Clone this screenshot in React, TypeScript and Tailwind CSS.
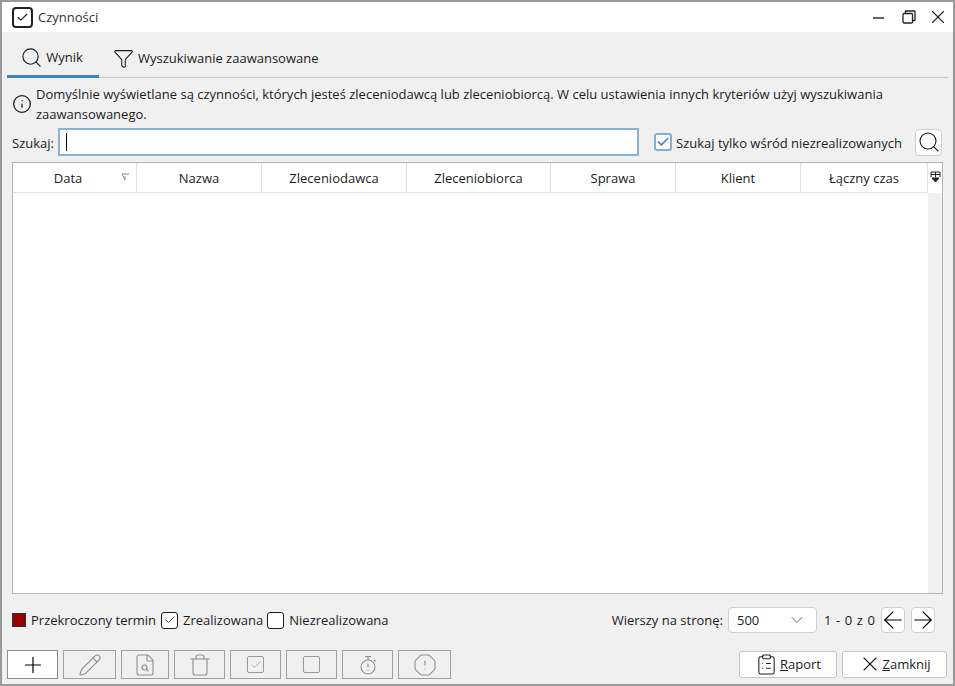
import React from 'react';
import { Search, Filter, Info, X, Plus, Pencil, FileSearch, Trash, Check, OctagonAlert, ChevronDown, ArrowLeft, ArrowRight, ClipboardList } from 'lucide-react';

const columns = [
  { name: 'Data', width: 'w-[124px] pr-[13px]' },
  { name: 'Nazwa', width: 'w-[125px]' },
  { name: 'Zleceniodawca', width: 'w-[145px]' },
  { name: 'Zleceniobiorca', width: 'w-[144px]' },
  { name: 'Sprawa', width: 'w-[125px]' },
  { name: 'Klient', width: 'w-[125px]' },
  { name: 'Łączny czas', width: 'w-[127px]' },
];

function CheckBox({ checked }: { checked?: boolean }) {
  return (
    <span className="flex h-[17px] w-[17px] items-center justify-center rounded-[3px] border border-[#1a1a1a] bg-white">
      {checked && <Check className="h-3 w-3 text-[#1a1a1a]" strokeWidth={1.5} />}
    </span>
  );
}

function ToolButton({ width, active, children }: { width: string; active?: boolean; children: React.ReactNode }) {
  return (
    <button className={`flex h-[29px] items-center justify-center border ${width} ${active ? 'border-[#8f8f8f] bg-white text-black' : 'border-[#a0a0a0] text-[#8f8f8f]'}`}>
      {children}
    </button>
  );
}

function SmallButton({ children }: { children: React.ReactNode }) {
  return (
    <button className="flex h-[26px] w-[24px] items-center justify-center rounded-[4px] border border-[#d0d0d0] bg-white text-black">
      {children}
    </button>
  );
}

export default function App() {
  return (
    <div className="flex h-[686px] w-[955px] flex-col overflow-hidden border-2 border-t-2 border-[#9a9a9a] bg-[#f0f0f0] text-[13px] text-[#1c1c1c] [font-family:'Open_Sans',sans-serif]">
      <div className="flex h-[30px] shrink-0 items-center bg-white pl-[10px] pr-[4px]">
        <span className="flex h-[21px] w-[21px] items-center justify-center rounded-[4px] border-2 border-[#222]">
          <Check className="h-[13px] w-[13px]" strokeWidth={2} />
        </span>
        <span className="ml-[5px] mt-[2px] text-[#333]">Czynności</span>
        <div className="ml-auto flex items-center text-[#222]">
          <svg width="11" height="14" viewBox="0 0 11 14" stroke="currentColor" strokeWidth="1.4">
            <path d="M0 8h11" />
          </svg>
          <svg className="ml-[18px]" width="14" height="14" viewBox="0 0 14 14" fill="none" stroke="currentColor" strokeWidth="1.3">
            <rect x="1" y="3.5" width="9.5" height="9.5" rx="1" />
            <path d="M3.5 3.5V1.5a.5.5 0 0 1 .5-.5h8.5a.5.5 0 0 1 .5.5V10a.5.5 0 0 1-.5.5h-2" />
          </svg>
          <X className="ml-[11px] h-[22px] w-[22px]" strokeWidth={1.2} />
        </div>
      </div>

      <div className="flex min-h-0 flex-1 flex-col px-[5px] pb-[5px] pt-[8px]">
        <div className="flex h-[38px] shrink-0 items-stretch border-b border-[#c8c8c8] pr-[1px]">
          <div className="-mb-px flex w-[92px] items-center justify-center gap-[3px] border-b-[3px] border-[#3d82bf] pr-[3px]">
            <Search className="h-[23px] w-[23px]" strokeWidth={1.2} />
            <span>Wynik</span>
          </div>
          <div className="ml-[14px] flex items-center gap-[4px]">
            <Filter className="h-[21px] w-[21px]" strokeWidth={1.2} />
            <span>Wyszukiwanie zaawansowane</span>
          </div>
        </div>

        <div className="mt-[6px] flex shrink-0 items-center pl-[5px]">
          <Info className="h-[20px] w-[20px] shrink-0" strokeWidth={1.5} />
          <p className="ml-[4px] w-[880px] leading-[20px]">
            Domyślnie wyświetlane są czynności, których jesteś zleceniodawcą lub zleceniobiorcą. W celu ustawienia innych kryteriów użyj wyszukiwania zaawansowanego.
          </p>
        </div>

        <div className="mt-[4px] flex h-[28px] shrink-0 items-center pl-[5px]">
          <span className="w-[46px] pt-[3px]">Szukaj:</span>
          <div className="flex h-[28px] w-[581px] items-center border-2 border-[#8ab2d6] bg-white pl-[6px]">
            <span className="h-[18px] w-px bg-black" />
          </div>
          <span className="ml-[15px] flex h-[18px] w-[18px] items-center justify-center rounded-[3px] border-2 border-[#7fb0dc] bg-white">
            <Check className="h-[14px] w-[14px] text-[#3d86c6]" strokeWidth={3} />
          </span>
          <span className="ml-[4px] pt-[3px]">Szukaj tylko wśród niezrealizowanych</span>
          <button className="ml-auto mr-[6px] flex h-[27px] w-[27px] items-center justify-center rounded-[4px] border border-[#d0d0d0] bg-white">
            <Search className="h-[24px] w-[24px]" strokeWidth={1.1} />
          </button>
        </div>

        <div className="ml-[5px] mt-[6px] flex min-h-0 w-[931px] flex-1 border border-[#b5b5b5] bg-white">
          <div className="flex w-[915px] flex-col">
            <div className="flex h-[30px] shrink-0 border-b border-[#e2e2e2]">
              {columns.map((col) => (
                <div key={col.name} className={`relative flex items-center justify-center border-r border-[#e2e2e2] pt-[2px] ${col.width}`}>
                  {col.name}
                  {col.name === 'Data' && (
                    <svg className="absolute right-[6px] top-[10px]" width="9" height="8" viewBox="0 0 9 8" fill="none" stroke="#8a8a8a" strokeWidth="1">
                      <path d="M1 1h7M1 1l3 6V3" />
                    </svg>
                  )}
                </div>
              ))}
            </div>
          </div>
          <div className="relative flex-1 bg-[#f0f0f0]">
            <div className="flex h-[30px] justify-center bg-white pt-[8px]">
              <svg width="11" height="12" viewBox="0 0 11 12" fill="none" stroke="#222" strokeWidth="1">
                <path d="M1 6V1h9v5M1 3.5h9M5.5 1v5" />
                <path d="M2 7h7L5.5 11z" fill="#222" />
              </svg>
            </div>
          </div>
        </div>

        <div className="mt-[13px] flex h-[26px] shrink-0 items-center pl-[5px] pr-[13px]">
          <span className="h-[14px] w-[14px] border border-[#333] bg-[#960000]" />
          <span className="ml-[5px] pt-[1px]">Przekroczony termin</span>
          <span className="ml-[5px]"><CheckBox checked /></span>
          <span className="ml-[5px] pt-[1px]">Zrealizowana</span>
          <span className="ml-[4px]"><CheckBox /></span>
          <span className="ml-[5px] pt-[1px]">Niezrealizowana</span>
          <span className="ml-auto pt-[1px]">Wierszy na stronę:</span>
          <div className="ml-[5px] flex h-[26px] w-[89px] items-center justify-between rounded-[4px] border border-[#d0d0d0] bg-white pl-[8px] pr-[9px]">
            <span className="pt-[1px]">500</span>
            <ChevronDown className="h-[20px] w-[20px] text-[#555]" strokeWidth={1.1} />
          </div>
          <span className="ml-[7px] mr-[6px] w-[51px] whitespace-nowrap pt-[1px] tracking-[0.6px]">1 - 0 z 0</span>
          <SmallButton><ArrowLeft className="h-[28px] w-[28px] shrink-0" strokeWidth={1} /></SmallButton>
          <span className="ml-[6px]"><SmallButton><ArrowRight className="h-[28px] w-[28px] shrink-0" strokeWidth={1} /></SmallButton></span>
        </div>

        <div className="mt-[17px] flex h-[29px] shrink-0 items-center">
          <div className="flex gap-[5px]">
            <ToolButton width="w-[51px]" active><Plus className="h-[26px] w-[26px]" strokeWidth={1.1} /></ToolButton>
            <ToolButton width="w-[53px]"><Pencil className="h-[24px] w-[24px]" strokeWidth={1.1} /></ToolButton>
            <ToolButton width="w-[48px]"><FileSearch className="h-[24px] w-[24px]" strokeWidth={1.1} /></ToolButton>
            <ToolButton width="w-[51px]"><Trash className="h-[24px] w-[24px]" strokeWidth={1.1} /></ToolButton>
            <ToolButton width="w-[51px]">
              <span className="flex h-[17px] w-[17px] items-center justify-center rounded-[2px] border border-[#9a9a9a]"><Check className="h-3 w-3" strokeWidth={1.3} /></span>
            </ToolButton>
            <ToolButton width="w-[51px]"><span className="h-[17px] w-[17px] rounded-[2px] border border-[#9a9a9a]" /></ToolButton>
            <ToolButton width="w-[51px]">
              <svg width="22" height="22" viewBox="0 0 22 22" fill="none" stroke="currentColor" strokeWidth="1.1">
                <circle cx="11" cy="13" r="7" />
                <path d="M8 2.5h6M11 2.5V6M17 6l1.5 1.5M11 9.5v4M11 15.5v1" />
              </svg>
            </ToolButton>
            <ToolButton width="w-[53px]"><OctagonAlert className="h-[24px] w-[24px]" strokeWidth={1.1} /></ToolButton>
          </div>
          <div className="ml-auto mr-[1px] -mt-[1px] flex gap-[5px]">
            <button className="flex h-[27px] w-[98px] items-center justify-center gap-[2px] rounded-[3px] border border-[#c4c4c4] bg-white">
              <ClipboardList className="h-[23px] w-[23px]" strokeWidth={1.1} />
              <span className="pt-[2px]"><span className="underline">R</span>aport</span>
            </button>
            <button className="flex h-[27px] w-[105px] items-center justify-center rounded-[3px] border border-[#c4c4c4] bg-white">
              <X className="h-[24px] w-[24px]" strokeWidth={1.1} />
              <span className="pt-[2px]"><span className="underline">Z</span>amknij</span>
            </button>
          </div>
        </div>
      </div>
    </div>
  );
}
